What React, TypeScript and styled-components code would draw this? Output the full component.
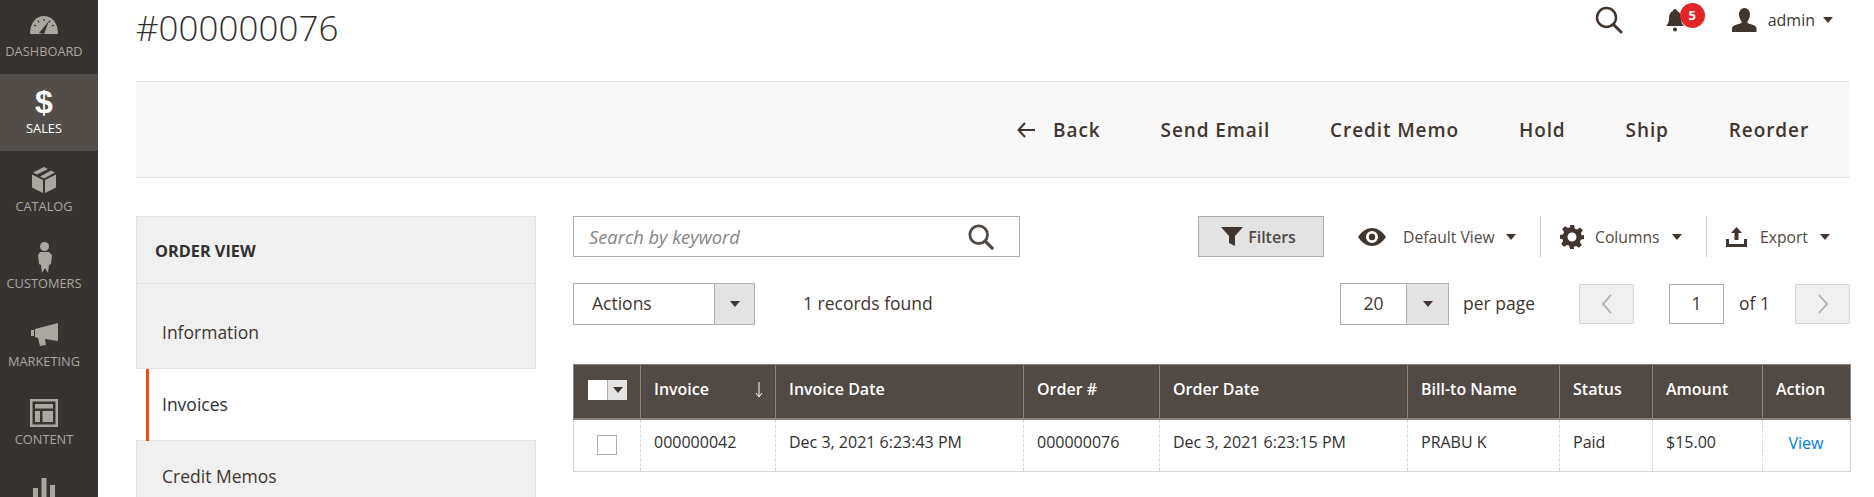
import React from "react";
import styled, { createGlobalStyle } from "styled-components";

const Global = createGlobalStyle`
  html, body { margin: 0; padding: 0; background: #fff; }
  body { font-family: "Open Sans", "Liberation Sans", sans-serif; color: #303030; }
  * { box-sizing: border-box; }
`;

const Page = styled.div`
  display: flex;
  width: 1874px;
  height: 497px;
  overflow: hidden;
`;

const Sidebar = styled.nav`
  flex: 0 0 98px;
  height: 497px;
  background: #373330;
  display: flex;
  flex-direction: column;
  overflow: hidden;
`;

const NavItem = styled.div<{ $active?: boolean }>`
  flex: 0 0 77.6px;
  display: flex;
  flex-direction: column;
  align-items: center;
  justify-content: flex-end;
  padding: 0 10px 15px 0;
  gap: 1px;
  background: ${(p) => (p.$active ? "#524d49" : "transparent")};
  color: ${(p) => (p.$active ? "#fff" : "#aaa6a0")};
  &:first-child { margin-top: -4px; }
`;

const NavIcon = styled.div`
  height: 34px;
  display: flex;
  align-items: center;
  justify-content: center;
`;

const ReportsIcon = styled.div`
  height: 77px;
  padding: 9px 10px 0 0;
  display: flex;
  justify-content: center;
`;

const NavLabel = styled.span`
  font-size: 12.8px;
  line-height: 16px;
  white-space: nowrap;
`;

const Dollar = styled.span`
  font-family: "Liberation Sans", sans-serif;
  font-weight: 700;
  font-size: 32px;
  line-height: 34px;
  color: #fff;
`;

const Main = styled.main`
  flex: 1;
  padding: 0 24px 0 38px;
  min-width: 0;
`;

const TopRow = styled.header`
  height: 81px;
  display: flex;
  justify-content: space-between;
  align-items: flex-start;
`;

const Title = styled.h1`
  margin: 6px 0 0;
  font-size: 35px;
  line-height: 44px;
  font-weight: 300;
  color: #303030;
`;

const UserTools = styled.div`
  display: flex;
  align-items: center;
  height: 30px;
  margin: 5px 17px 0 0;
`;

const BellWrap = styled.div`
  position: relative;
  width: 22px;
  height: 24px;
  margin-left: 42px;
  margin-right: 45px;
  display: flex;
`;

const Badge = styled.span`
  position: absolute;
  left: 15px;
  top: -5px;
  width: 25px;
  height: 25px;
  border-radius: 50%;
  background: #e22626;
  color: #fff;
  font-size: 13px;
  font-weight: 700;
  line-height: 25px;
  text-align: center;
`;

const AdminName = styled.span`
  margin-left: 11px;
  margin-right: 8px;
  font-size: 16px;
  color: #41362f;
`;

const Caret = styled.span<{ $size?: number }>`
  display: inline-block;
  width: 0;
  height: 0;
  border-left: ${(p) => p.$size ?? 5}px solid transparent;
  border-right: ${(p) => p.$size ?? 5}px solid transparent;
  border-top: ${(p) => (p.$size ?? 5) + 1}px solid #41362f;
`;

const ActionBar = styled.div`
  height: 97px;
  display: flex;
  align-items: center;
  justify-content: flex-end;
  gap: 60px;
  padding: 0 41px 0 0;
  background: #f8f8f8;
  border-top: 1px solid #e3e3e3;
  border-bottom: 1px solid #e3e3e3;
`;

const BarButton = styled.span`
  display: inline-flex;
  align-items: center;
  gap: 18px;
  font-size: 19px;
  font-weight: 600;
  letter-spacing: 0.9px;
  color: #41362f;
  white-space: nowrap;
`;

const Columns = styled.div`
  display: grid;
  grid-template-columns: 400px 1277px;
  column-gap: 37px;
  margin-top: 38px;
`;

const Panel = styled.aside`
  background: #f0f0f0;
  border: 1px solid #e3e3e3;
  border-bottom: 0;
  height: 300px;
`;

const PanelHead = styled.div`
  height: 67px;
  display: flex;
  align-items: center;
  padding: 2px 0 0 18px;
  border-bottom: 1px solid #e3e3e3;
  font-size: 16.300px;
  font-weight: 700;
  color: #303030;
`;

const PanelItem = styled.div<{ $active?: boolean; $first?: boolean }>`
  position: relative;
  margin-right: ${(p) => (p.$active ? "-1px" : "0")};
  margin-left: ${(p) => (p.$active ? "-1px" : "0")};
  display: flex;
  align-items: center;
  padding-left: ${(p) => (p.$active ? "26px" : "25px")};
  padding-top: ${(p) => (p.$first ? "13px" : "0")};
  padding-bottom: 2px;
  height: ${(p) => (p.$first ? "85px" : "72px")};
  font-size: 17.500px;
  color: ${(p) => (p.$active ? "#303030" : "#41362f")};
  font-weight: ${(p) => (p.$active ? 500 : 400)};
  background: ${(p) => (p.$active ? "#fff" : "transparent")};
  border-bottom: 1px solid #e3e3e3;
  ${(p) =>
    p.$active
      ? `&::before { content: ""; position: absolute; left: 10px; top: 0; bottom: -1px; width: 3px; background: #eb5202; }`
      : ""}
`;

const Content = styled.section`
  min-width: 0;
`;

const ToolRow = styled.div`
  display: flex;
  align-items: center;
  height: 41px;
`;

const SearchBox = styled.div`
  width: 447px;
  height: 41px;
  border: 1px solid #adadad;
  display: flex;
  align-items: center;
  justify-content: space-between;
  padding: 0 25px 0 15px;
`;

const Placeholder = styled.span`
  font-size: 18.300px;
  font-style: italic;
  color: #858585;
`;

const FiltersBtn = styled.div`
  width: 126px;
  height: 41px;
  margin-left: 178px;
  padding-right: 5px;
  background: #e3e3e3;
  border: 1px solid #adadad;
  display: flex;
  align-items: center;
  justify-content: center;
  gap: 5px;
  font-size: 16px;
  font-weight: 600;
  color: #514943;
`;

const Tool = styled.div<{ $w: number; $sep?: boolean }>`
  width: ${(p) => p.$w}px;
  height: 41px;
  display: flex;
  align-items: center;
  font-size: 15.700px;
  color: #514943;
  ${(p) => (p.$sep ? "border-left: 1px solid #ccc;" : "")}
`;

const ToolIcon = styled.span<{ $pl: number; $w: number }>`
  display: inline-flex;
  padding-left: ${(p) => p.$pl}px;
  width: ${(p) => p.$w}px;
  flex: none;
`;

const ToolText = styled.span<{ $mr: number }>`
  margin-right: ${(p) => p.$mr}px;
  white-space: nowrap;
`;

const PagerRow = styled.div`
  display: flex;
  align-items: center;
  height: 42px;
  margin-top: 26px;
`;

const SelectBox = styled.div<{ $w: number; $arrow: number }>`
  width: ${(p) => p.$w}px;
  height: 42px;
  border: 1px solid #adadad;
  display: grid;
  grid-template-columns: 1fr ${(p) => p.$arrow}px;
  font-size: 17.500px;
  color: #41362f;
`;

const SelectText = styled.span<{ $center?: boolean }>`
  display: flex;
  align-items: center;
  justify-content: ${(p) => (p.$center ? "center" : "flex-start")};
  padding: 0 0 2px ${(p) => (p.$center ? "0" : "18px")};
`;

const SelectArrow = styled.span`
  background: #e3e3e3;
  border-left: 1px solid #adadad;
  display: flex;
  align-items: center;
  justify-content: center;
`;

const Records = styled.span`
  margin: 0 0 2px 48px;
  font-size: 17.500px;
  color: #41362f;
`;

const Spacer = styled.div`
  flex: 1;
`;

const PerPage = styled.span`
  margin: 0 44px 2px 14px;
  font-size: 17.500px;
  color: #41362f;
`;

const PageBtn = styled.span`
  width: 55px;
  height: 40px;
  background: #f0f0f0;
  border: 1px solid #d6d6d6;
  display: flex;
  align-items: center;
  justify-content: center;
`;

const PageInput = styled.span`
  width: 55px;
  height: 40px;
  margin-left: 35px;
  padding-bottom: 2px;
  border: 1px solid #adadad;
  display: flex;
  align-items: center;
  justify-content: center;
  font-size: 17.500px;
  color: #41362f;
`;

const OfText = styled.span`
  margin: 0 25px 2px 15px;
  font-size: 17.500px;
  color: #41362f;
`;

const Table = styled.table`
  width: 1277px;
  margin-top: 39px;
  table-layout: fixed;
  border-collapse: collapse;
  font-size: 16px;
`;

const Th = styled.th`
  position: relative;
  height: 54px;
  padding: 0 0 5px 13px;
  background: #514943;
  color: #fff;
  font-weight: 600;
  font-size: 16px;
  text-align: left;
  border: 1px solid #8a837f;
  border-bottom: 2px solid #8a837f;
  white-space: nowrap;
`;

const Td = styled.td<{ $center?: boolean }>`
  height: 53px;
  padding: ${(p) => (p.$center ? "0 1px 4px 0" : "0 0 6px 13px")};
  text-align: ${(p) => (p.$center ? "center" : "left")};
  color: #303030;
  border-left: 1px dashed #d6d6d6;
  border-right: 1px dashed #d6d6d6;
  border-bottom: 1px solid #d6d6d6;
  &:first-child { border-left: 1px solid #d6d6d6; }
  &:last-child { border-right: 1px solid #d6d6d6; }
  white-space: nowrap;
`;

const SortArrow = styled.svg`
  position: absolute;
  right: 12px;
  top: 17px;
`;

const MassSelect = styled.div`
  display: grid;
  grid-template-columns: 19px 20px;
  height: 20px;
  width: 39px;
  margin: 3px 0 0 1px;
`;

const MassBox = styled.span`
  background: #fff;
`;

const MassArrow = styled.span`
  background: #e3e3e3;
  border-left: 1px solid #adadad;
  display: flex;
  align-items: center;
  justify-content: center;
`;

const Checkbox = styled.span`
  display: inline-block;
  width: 20px;
  height: 20px;
  border: 1px solid #adadad;
  vertical-align: middle;
`;

const Link = styled.a`
  color: #007bdb;
`;

const SearchIcon = ({ size = 28, color = "#41362f", sw = 3 }: { size?: number; color?: string; sw?: number }) => (
  <svg width={size} height={size} viewBox="0 0 28 28" fill="none">
    <circle cx="11.5" cy="11.5" r="9.5" stroke={color} strokeWidth={sw} />
    <path d="M18.5 18.5 L26 26" stroke={color} strokeWidth={sw + 0.5} strokeLinecap="round" />
  </svg>
);

const widths = [67, 135, 248, 136, 248, 152, 93, 110, 88];
const C = "#aaa6a0";

export default function App() {
  return (
    <Page>
      <Global />
      <Sidebar>
        <NavItem>
          <NavIcon>
            <svg width="28" height="20" viewBox="0 0 28 20">
              <path d="M0 19C0 8 6 1 14 1s14 7 14 18z" fill={C} />
              <path d="M9 18 19 6l-5 13z" fill="#373330" />
              <path d="M14 4v2M8 5.500l1 2M20 5.500l-1 2M4 10l2 1M24 10l-2 1" stroke="#373330" strokeWidth="1.200" />
            </svg>
          </NavIcon>
          <NavLabel>DASHBOARD</NavLabel>
        </NavItem>
        <NavItem $active>
          <NavIcon>
            <Dollar>$</Dollar>
          </NavIcon>
          <NavLabel>SALES</NavLabel>
        </NavItem>
        <NavItem>
          <NavIcon>
            <svg width="24" height="26" viewBox="0 0 24 26">
              <path d="M0 7.500 11 13v13L0 20.500zM24 7.500 13 13v13l11-5.500z" fill={C} />
              <path d="M12 0 16 2 5 7.500 1 5.500zM19 3.500 23 5.500 12 11.500 8 9.500z" fill={C} />
            </svg>
          </NavIcon>
          <NavLabel>CATALOG</NavLabel>
        </NavItem>
        <NavItem>
          <NavIcon>
            <svg width="15" height="31" viewBox="0 0 15 31">
              <circle cx="7.500" cy="4.500" r="4.500" fill={C} />
              <path d="M3 10h9l3 3-1 9-2 1-1 8-3-5-3 5-1-8-2-1-1-9z" fill={C} />
            </svg>
          </NavIcon>
          <NavLabel>CUSTOMERS</NavLabel>
        </NavItem>
        <NavItem>
          <NavIcon>
            <svg width="27" height="23" viewBox="0 0 27 23">
              <path d="M0 7h3v6H0zM4 6l23-6v18l-13-2 1 6-6 1-2-8-3-1z" fill={C} />
            </svg>
          </NavIcon>
          <NavLabel>MARKETING</NavLabel>
        </NavItem>
        <NavItem>
          <NavIcon>
            <svg width="28" height="28" viewBox="0 0 28 28">
              <path fillRule="evenodd" d="M0 0h28v28H0zM2.500 2.500v23h23v-23z" fill={C} />
              <path d="M5 5h18v4.500H5zM5 12h5v11H5zM12.500 12H23v11H12.500z" fill={C} />
            </svg>
          </NavIcon>
          <NavLabel>CONTENT</NavLabel>
        </NavItem>
        <ReportsIcon>
          <svg width="24" height="34" viewBox="0 0 24 34">
            <path d="M1 17h5v17H1zM9.500 7h5v27h-5zM18 14h5v20h-5z" fill={C} />
          </svg>
        </ReportsIcon>
      </Sidebar>

      <Main>
        <TopRow>
          <Title>#000000076</Title>
          <UserTools>
            <SearchIcon size={28} color="#41362f" sw={2.500} />
            <BellWrap>
              <svg width="20" height="24" viewBox="0 0 20 24">
                <path d="M10 1c1.500 0 2 1 2 2 3 1 4 4 4 7 0 4 1 6 3 8H1c2-2 3-4 3-8 0-3 1-6 4-7 0-1 .500-2 2-2z" fill="#41362f" />
                <circle cx="10" cy="21.500" r="2" fill="#41362f" />
              </svg>
              <Badge>5</Badge>
            </BellWrap>
            <svg width="25" height="24" viewBox="0 0 25 24">
              <path d="M12.500 0c3.500 0 5.500 3 5.500 6.500 0 2.500-1 5-2.500 6.500v2c3 1.500 9 2 9 5.500V24H0v-3.500C0 17 6 16.500 9.500 15v-2C8 11.500 7 9 7 6.500 7 3 9 0 12.500 0z" fill="#41362f" />
            </svg>
            <AdminName>admin</AdminName>
            <Caret />
          </UserTools>
        </TopRow>

        <ActionBar>
          <BarButton>
            <svg width="18" height="16" viewBox="0 0 18 16" fill="none">
              <path d="M8 1 1.500 8 8 15M2 8h16" stroke="#41362f" strokeWidth="2" />
            </svg>
            Back
          </BarButton>
          <BarButton>Send Email</BarButton>
          <BarButton>Credit Memo</BarButton>
          <BarButton>Hold</BarButton>
          <BarButton>Ship</BarButton>
          <BarButton>Reorder</BarButton>
        </ActionBar>

        <Columns>
          <Panel>
            <PanelHead>ORDER VIEW</PanelHead>
            <PanelItem $first>Information</PanelItem>
            <PanelItem $active>Invoices</PanelItem>
            <PanelItem>Credit Memos</PanelItem>
          </Panel>

          <Content>
            <ToolRow>
              <SearchBox>
                <Placeholder>Search by keyword</Placeholder>
                <SearchIcon size={26} color="#514943" />
              </SearchBox>
              <FiltersBtn>
                <svg width="22" height="19" viewBox="0 0 22 19">
                  <path d="M0 0h22l-8 9v10l-6-3V9z" fill="#41362f" />
                </svg>
                Filters
              </FiltersBtn>
              <Tool $w={216}>
                <ToolIcon $pl={34} $w={79}>
                  <svg width="28" height="18" viewBox="0 0 28 18">
                    <path fillRule="evenodd" d="M0 9C4 3 9 0 14 0s10 3 14 9c-4 6-9 9-14 9S4 15 0 9zm14-6a6 6 0 1 0 0 12 6 6 0 0 0 0-12z" fill="#41362f" />
                    <circle cx="14" cy="9" r="3.200" fill="#41362f" />
                  </svg>
                </ToolIcon>
                <ToolText $mr={11}>Default View</ToolText>
                <Caret />
              </Tool>
              <Tool $w={166} $sep>
                <ToolIcon $pl={19} $w={54}>
                  <svg width="24" height="24" viewBox="0 0 24 24">
                    <path fillRule="evenodd" d="M10 0h4l.800 3.500 2.200.900 3-1.900 2.800 2.800-1.900 3 .900 2.200L24 10v4l-3.200.800-.900 2.200 1.900 3-2.800 2.800-3-1.900-2.200.900L14 24h-4l-.800-3.200-2.200-.900-3 1.900-2.800-2.800 1.900-3-.900-2.200L0 14v-4l3.200-.800.900-2.200-1.900-3 2.800-2.800 3 1.900 2.200-.900zM12 7.500a4.500 4.500 0 1 0 0 9 4.500 4.500 0 0 0 0-9z" fill="#41362f" />
                  </svg>
                </ToolIcon>
                <ToolText $mr={12}>Columns</ToolText>
                <Caret />
              </Tool>
              <Tool $w={144} $sep>
                <ToolIcon $pl={19} $w={53}>
                  <svg width="21" height="20" viewBox="0 0 21 20">
                    <path d="M10.500 0 16 6h-3.500v7h-4V6H5zM0 12h3v5h15v-5h3v8H0z" fill="#41362f" />
                  </svg>
                </ToolIcon>
                <ToolText $mr={12}>Export</ToolText>
                <Caret />
              </Tool>
            </ToolRow>

            <PagerRow>
              <SelectBox $w={182} $arrow={40}>
                <SelectText>Actions</SelectText>
                <SelectArrow><Caret /></SelectArrow>
              </SelectBox>
              <Records>1 records found</Records>
              <Spacer />
              <SelectBox $w={109} $arrow={42}>
                <SelectText $center>20</SelectText>
                <SelectArrow><Caret /></SelectArrow>
              </SelectBox>
              <PerPage>per page</PerPage>
              <PageBtn>
                <svg width="12" height="20" viewBox="0 0 12 20" fill="none">
                  <path d="M10 1 2 10l8 9" stroke="#adadad" strokeWidth="1.800" />
                </svg>
              </PageBtn>
              <PageInput>1</PageInput>
              <OfText>of 1</OfText>
              <PageBtn>
                <svg width="12" height="20" viewBox="0 0 12 20" fill="none">
                  <path d="m2 1 8 9-8 9" stroke="#adadad" strokeWidth="1.800" />
                </svg>
              </PageBtn>
            </PagerRow>

            <Table>
              <colgroup>
                {widths.map((w, i) => (
                  <col key={i} style={{ width: w }} />
                ))}
              </colgroup>
              <thead>
                <tr>
                  <Th>
                    <MassSelect>
                      <MassBox />
                      <MassArrow><Caret /></MassArrow>
                    </MassSelect>
                  </Th>
                  <Th>
                    Invoice
                    <SortArrow width="8" height="16" viewBox="0 0 8 16" fill="none">
                      <path d="M4 0v14M1 11l3 4 3-4" stroke="#fff" strokeWidth="1" />
                    </SortArrow>
                  </Th>
                  <Th>Invoice Date</Th>
                  <Th>Order #</Th>
                  <Th>Order Date</Th>
                  <Th>Bill-to Name</Th>
                  <Th>Status</Th>
                  <Th>Amount</Th>
                  <Th>Action</Th>
                </tr>
              </thead>
              <tbody>
                <tr>
                  <Td $center><Checkbox /></Td>
                  <Td>000000042</Td>
                  <Td>Dec 3, 2021 6:23:43 PM</Td>
                  <Td>000000076</Td>
                  <Td>Dec 3, 2021 6:23:15 PM</Td>
                  <Td>PRABU K</Td>
                  <Td>Paid</Td>
                  <Td>$15.00</Td>
                  <Td $center><Link>View</Link></Td>
                </tr>
              </tbody>
            </Table>
          </Content>
        </Columns>
      </Main>
    </Page>
  );
}
